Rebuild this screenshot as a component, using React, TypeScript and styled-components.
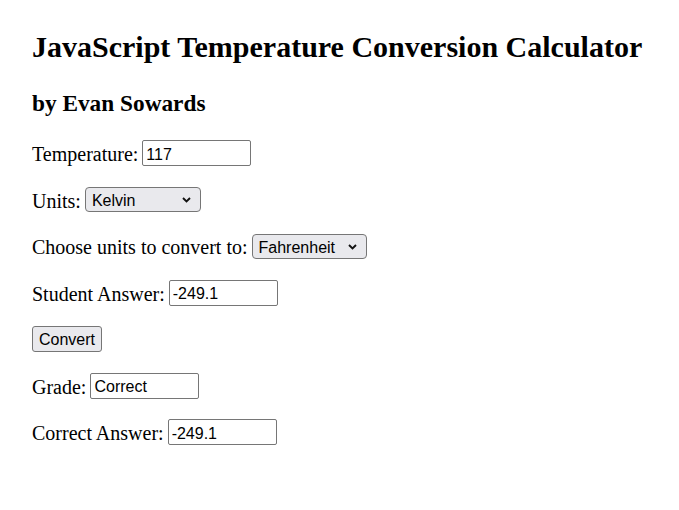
import React from "react";
import styled, { createGlobalStyle } from "styled-components";

const Global = createGlobalStyle`
  html, body { background: #ffffff; }
  body {
    margin: 0;
    padding: 0 32px;
    font-family: "Liberation Serif", "Times New Roman", serif;
    font-size: 20px;
    color: #000;
  }
`;

const Title = styled.h1`
  font-size: 30px;
  font-weight: bold;
  margin: 30px 0 0;
  line-height: 34px;
  white-space: nowrap;
`;

const Byline = styled.h2`
  font-size: 23.3px;
  font-weight: bold;
  margin: 26px 0 0;
  line-height: 27px;
`;

const Row = styled.p<{ $first?: boolean }>`
  margin: ${(p) => (p.$first ? "23px" : "20.5px")} 0 0;
  display: flex;
  align-items: center;
  gap: 4px;
  height: 26px;
  line-height: 26px;
`;

const Label = styled.span`
  position: relative;
  top: 1px;
`;

const controlFont = `
  font-family: "Liberation Sans", Arial, sans-serif;
  font-size: 16px;
  color: #000;
`;

const TextInput = styled.input`
  box-sizing: border-box;
  width: 109px;
  height: 26px;
  padding: 3px 3px 0;
  border: 1px solid #767676;
  border-radius: 2px;
  ${controlFont}
  background: #fff;
  outline: none;
`;

const SelectWrap = styled.span`
  position: relative;
  display: inline-flex;
`;

const Select = styled.select<{ $w: number }>`
  appearance: none;
  -webkit-appearance: none;
  box-sizing: border-box;
  width: ${(p) => p.$w}px;
  height: 25px;
  padding: 2px 0 0 6px;
  border: 1px solid #767676;
  border-radius: 4px;
  background: #e9e9ed;
  ${controlFont}
`;

const Chevron = styled.svg`
  position: absolute;
  right: 10px;
  top: 10px;
  width: 9px;
  height: 6px;
  pointer-events: none;
`;

const Button = styled.button`
  box-sizing: border-box;
  width: 70px;
  height: 26px;
  padding: 2px 0 0;
  border: 1px solid #767676;
  border-radius: 3px;
  background: #e9e9ed;
  ${controlFont}
`;

const UnitSelect = ({ w, value }: { w: number; value: string }) => (
  <SelectWrap>
    <Select $w={w} defaultValue={value}>
      <option>Kelvin</option>
      <option>Celsius</option>
      <option>Fahrenheit</option>
    </Select>
    <Chevron viewBox="0 0 9 6">
      <path d="M1 1 L4.5 4.5 L8 1" fill="none" stroke="#111" strokeWidth="1.9" />
    </Chevron>
  </SelectWrap>
);

export default function App() {
  return (
    <>
      <Global />
      <Title>JavaScript Temperature Conversion Calculator</Title>
      <Byline>by Evan Sowards</Byline>
      <Row $first>
        <Label>Temperature:</Label>
        <TextInput defaultValue="117" />
      </Row>
      <Row>
        <Label>Units:</Label>
        <UnitSelect w={116} value="Kelvin" />
      </Row>
      <Row>
        <Label>Choose units to convert to:</Label>
        <UnitSelect w={115} value="Fahrenheit" />
      </Row>
      <Row>
        <Label>Student Answer:</Label>
        <TextInput defaultValue="-249.1" />
      </Row>
      <Row>
        <Button>Convert</Button>
      </Row>
      <Row>
        <Label>Grade:</Label>
        <TextInput defaultValue="Correct" />
      </Row>
      <Row>
        <Label>Correct Answer:</Label>
        <TextInput defaultValue="-249.1" />
      </Row>
    </>
  );
}
